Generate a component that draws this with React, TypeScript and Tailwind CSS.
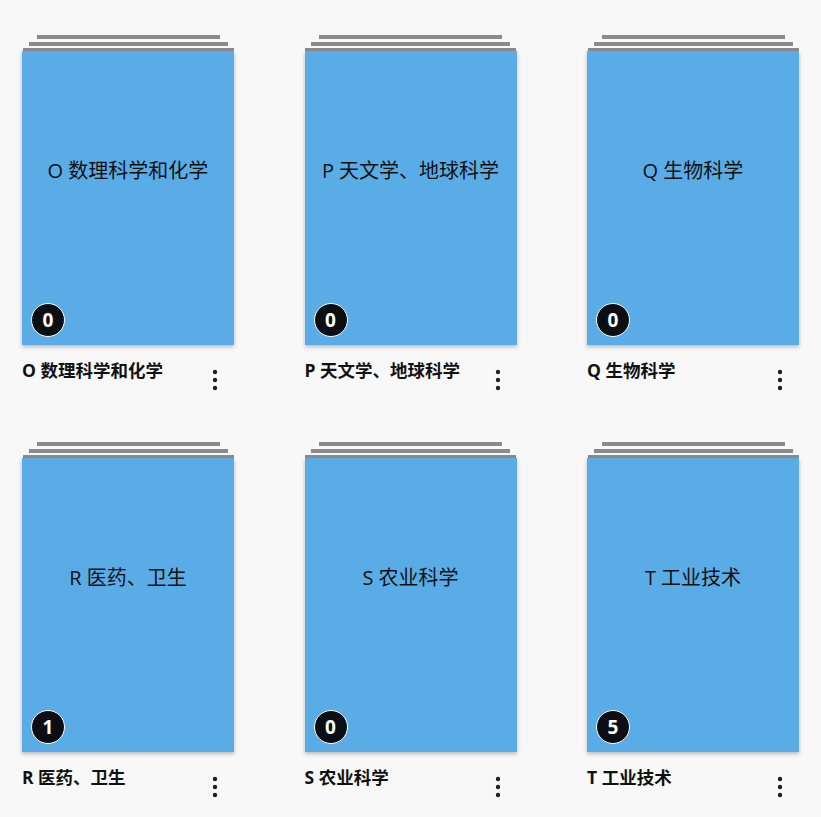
const shelves = [
  { code: 'O', name: '数理科学和化学', count: 0 },
  { code: 'P', name: '天文学、地球科学', count: 0 },
  { code: 'Q', name: '生物科学', count: 0 },
  { code: 'R', name: '医药、卫生', count: 1 },
  { code: 'S', name: '农业科学', count: 0 },
  { code: 'T', name: '工业技术', count: 5 },
]

function MoreIcon() {
  return (
    <svg width="20" height="24" viewBox="0 0 20 24" fill="#1f1f1f">
      <circle cx="10" cy="4" r="2.2" />
      <circle cx="10" cy="12" r="2.2" />
      <circle cx="10" cy="20" r="2.2" />
    </svg>
  )
}

function BookStack({ code, name, count }: { code: string; name: string; count: number }) {
  const title = `${code} ${name}`
  return (
    <div className="flex w-[212px] flex-col">
      {/* stacked page edges */}
      <div className="flex h-[16px] flex-col items-center">
        <div className="h-[4px] w-[183px] bg-[#8b8b8b]" />
        <div className="mt-[3px] h-[4px] w-[199px] bg-[#8b8b8b]" />
        <div className="mt-[2px] h-[3px] w-[211px] bg-[#8b8b8b]" />
      </div>
      <div className="relative flex h-[294px] items-center justify-center bg-[#5aace6] pb-[55px] shadow-[0_2px_4px_rgba(0,0,0,0.25)]">
        <span className="text-[20px] text-[#111]">{title}</span>
        <div className="absolute bottom-[8px] left-[9px] flex h-[34px] w-[34px] items-center justify-center rounded-full border border-white bg-[#0b0f14] text-[19px] font-bold text-white">
          {count}
        </div>
      </div>
      <div className="mt-[12px] flex items-start justify-between">
        <span className="text-[17.5px] font-bold leading-[26px] text-[#111]">{title}</span>
        <div className="mr-[9px] mt-[11px]">
          <MoreIcon />
        </div>
      </div>
    </div>
  )
}

export default function App() {
  return (
    <div
      className="min-h-[817px] bg-[#f8f8f8] pl-[22px] pt-[35px]"
      style={{ fontFamily: '"Open Sans", "Noto Sans CJK SC", sans-serif' }}
    >
      <div className="grid grid-cols-[212px_212px_212px] gap-x-[70.5px] gap-y-[50px]">
        {shelves.map((s) => (
          <BookStack key={s.code} {...s} />
        ))}
      </div>
    </div>
  )
}
